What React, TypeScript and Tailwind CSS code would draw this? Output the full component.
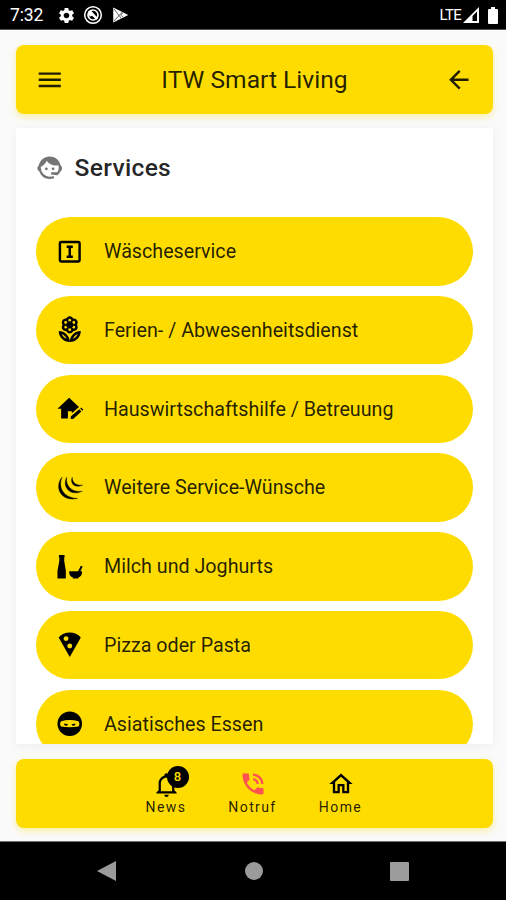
import type { ReactNode } from "react";
import { MdOutlineLocalFlorist, MdPhoneInTalk, MdSettings } from "react-icons/md";

function Icon({ children, className = "size-[29.5px]" }: { children: ReactNode; className?: string }) {
    return (
        <svg xmlns="http://www.w3.org/2000/svg" viewBox="0 0 24 24" fill="currentColor" className={className}>
            {children}
        </svg>
    );
}

const services = [
    {
        label: "Wäscheservice",
        icon: (
            <Icon>
                <path d="M5 3h14a2 2 0 0 1 2 2v14a2 2 0 0 1-2 2H5a2 2 0 0 1-2-2V5a2 2 0 0 1 2-2m0 2v14h14V5zm4.500 2h5v2H13v6h1.500v2h-5v-2H11V9H9.500z" />
            </Icon>
        ),
    },
    { label: "Ferien- / Abwesenheitsdienst", icon: <MdOutlineLocalFlorist className="size-[29.5px]" /> },
    {
        label: "Hauswirtschaftshilfe / Betreuung",
        icon: (
            <Icon>
                <path d="M11.500 3 2 12h3v8h5.500v-6h3.200v1.600L19.500 10.500z" />
                <path d="m12.800 18.400 6.900-6 1.800 1.900-6.800 6h-1.900zM20.500 11.700l.8-.7 1.800 1.900-.8.700z" />
            </Icon>
        ),
    },
    {
        label: "Weitere Service-Wünsche",
        icon: (
            <Icon>
                <path d="M5.700 3.500C-.5 11 4 23.500 18.200 20.700 8 20.500 1.800 12.500 5.700 3.500" stroke="currentColor" strokeWidth=".4" />
                <path d="M9.500 3.500C5.500 11 12 19.500 22.200 14.800 14.500 16 8.500 11.500 9.500 3.500" stroke="currentColor" strokeWidth=".3" />
                <path d="M14 3.500C12 8.500 16 13 22.500 9.800 17.500 10.500 14 8 14 3.500" stroke="currentColor" strokeWidth=".3" />
            </Icon>
        ),
    },
    {
        label: "Milch und Joghurts",
        icon: (
            <Icon>
                <path d="M3.200 2.500h4.600v1.800h-.3v3l1.300 8v6.200H2v-6.200l1.500-8v-3h-.3zM11.500 15.600h7.300l2.200-4.400 1.500.6-1.900 3.800H22c.2 3-1.200 4.600-3 5.200v.7h-4.500v-.7c-1.800-.6-3.200-2.200-3-5.200" />
            </Icon>
        ),
    },
    {
        label: "Pizza oder Pasta",
        icon: (
            <Icon>
                <path d="M12 15a2 2 0 0 1-2-2c0-1.110.9-2 2-2a2 2 0 0 1 2 2 2 2 0 0 1-2 2M7 7c0-1.110.890-2 2-2a2 2 0 0 1 2 2 2 2 0 0 1-2 2c-1.110 0-2-.9-2-2m5-5C8.430 2 5.230 3.540 3 6l9 16 9-16c-2.220-2.460-5.430-4-9-4" />
            </Icon>
        ),
    },
    {
        label: "Asiatisches Essen",
        icon: (
            <Icon>
                <path
                    fillRule="evenodd"
                    d="M12 2a10 10 0 1 0 0 20 10 10 0 0 0 0-20M5 10c4.500-1.300 9.500-1.300 14 0 1.100 1.300 1.100 2.900.2 4.200-4.700.9-9.700.9-14.400 0-.9-1.300-.9-2.900.2-4.200m2.500 1.700a1.600 1.500 0 0 0 3.100.8zm9 0-3.100.8a1.600 1.500 0 0 0 3.100-.8"
                />
            </Icon>
        ),
    },
];

function StatusBar() {
    return (
        <div className="flex h-[30px] shrink-0 items-center justify-between border-b border-neutral-600 bg-black pt-px pr-2 pl-[10px] text-white">
            <div className="flex items-center">
                <span className="w-[47px] text-[17.5px] tracking-[-0.1px]">7:32</span>
                <MdSettings className="size-[19px]" />
                <Icon className="ml-[7px] size-5">
                    <circle cx="12" cy="12" r="10" fill="none" stroke="currentColor" strokeWidth="1.800" />
                    <circle cx="12" cy="12" r="6" fill="none" stroke="currentColor" strokeWidth="2" />
                    <path d="m6 8 3-2 9 10-2 2-5-5-3 1z" />
                </Icon>
                <Icon className="ml-[8px] size-[18px]">
                    <path d="M3 2 23 12 3 22z" />
                    <path fill="none" stroke="#555" strokeWidth="1.200" d="m4 4 10 13M4 20 15 8m1 1-3 3 3 3" />
                </Icon>
            </div>
            <div className="flex items-center">
                <span className="text-[15px] tracking-[-0.7px]">LTE</span>
                <svg viewBox="0 0 16 16" fill="currentColor" className="ml-[2px] size-4">
                    <path fillRule="evenodd" d="M16 0v16H0zm-2 4.500-4.500 4.500v5H14z" />
                </svg>
                <svg viewBox="0 0 10 17" fill="currentColor" className="ml-[9px] h-[17px] w-[10px]">
                    <path d="M3 0h4v2h2a1 1 0 0 1 1 1v13a1 1 0 0 1-1 1H1a1 1 0 0 1-1-1V3a1 1 0 0 1 1-1h2z" />
                </svg>
            </div>
        </div>
    );
}

export default function App() {
    return (
        <div className="flex h-[900px] w-[506px] flex-col overflow-hidden bg-[#fafafa] font-['Roboto',sans-serif] text-black/87">
            <StatusBar />

            <header className="mt-[15px] mr-[13px] ml-4 flex h-[69px] shrink-0 items-center justify-between rounded-lg bg-[#ffdc00] pr-[19px] pl-[19px] shadow-[0_3px_7px_rgba(255,220,0,0.35)]">
                <Icon>
                    <path d="M3 6h18v2H3zm0 5h18v2H3zm0 5h18v2H3z" />
                </Icon>
                <h1 className="pt-px text-[24.6px]">ITW Smart Living</h1>
                <Icon>
                    <path d="M20 11v2H8l5.500 5.500-1.420 1.420L4.160 12l7.920-7.920L13.500 5.500 8 11z" />
                </Icon>
            </header>

            <main className="mt-[14px] mr-[13px] ml-4 h-[616px] shrink-0 overflow-hidden bg-white shadow-[0_2px_10px_rgba(0,0,0,0.05)]">
                <div className="flex h-[89px] items-start pt-[22px] pl-[19px]">
                    <Icon className="mt-[3px] size-[29.5px] text-[#757575]">
                        <path d="M18.720 14.760c.350-.850.540-1.760.540-2.760 0-.720-.110-1.410-.3-2.050-.650.150-1.330.230-2.040.230-3.060 0-5.770-1.510-7.420-3.840-.890 2.160-2.590 3.920-4.730 4.880-.040.250-.040.520-.040.780A7.270 7.270 0 0 0 12 19.270c1.050 0 2.060-.230 2.970-.640.570 1.090.830 1.630.810 1.630-1.640.550-2.910.820-3.780.820-2.420 0-4.730-.950-6.430-2.660a9 9 0 0 1-2.240-3.690C2.500 14.500 2 13.500 2 12.450c0-1.050.4-1.900 1.090-2.270C3.930 6.040 7.600 2.920 12 2.920c2.400 0 4.710.950 6.420 2.660a9.100 9.100 0 0 1 2.470 4.600C21.600 10.600 22 11.400 22 12.450c0 1.100-.5 2-1.200 2.600L18.380 18l-5.300-.6v-1.670h4.830z" />
                        <circle cx="9.270" cy="12.910" r="1.140" />
                        <circle cx="14.720" cy="12.910" r="1.140" />
                    </Icon>
                    <h2 className="ml-[10px] text-[24.6px] leading-9 font-medium tracking-[0.31px]">Services</h2>
                </div>
                <ul className="flex flex-col gap-[10.3px] pr-5 pl-[19.5px]">
                    {services.map((service) => (
                        <li key={service.label} className="flex h-[68.5px] shrink-0 items-center rounded-full bg-[#ffdc00] pl-[19.2px]">
                            <span className="w-[49.3px] text-black">{service.icon}</span>
                            <span className="pt-px text-[19.7px] whitespace-nowrap">{service.label}</span>
                        </li>
                    ))}
                </ul>
            </main>

            <nav className="mt-[15px] mr-[13px] ml-4 flex h-[69px] shrink-0 justify-center rounded-lg bg-[#ffdc00] pr-[1px] text-[14px] leading-4 tracking-[1.4px] shadow-[0_3px_7px_rgba(255,220,0,0.35)]">
                <div className="flex w-[87px] flex-col items-center pt-[12px]">
                    <span className="relative text-black">
                        <Icon className="size-[27px]">
                            <path d="M10 21h4c0 1.100-.9 2-2 2s-2-.9-2-2m11-2v1H3v-1l2-2v-6c0-3.100 2-5.800 5-6.700V4c0-1.100.9-2 2-2s2 .9 2 2v.3c3 .9 5 3.600 5 6.700v6zm-4-8c0-2.800-2.200-5-5-5s-5 2.200-5 5v7h10z" />
                        </Icon>
                        <span className="absolute -top-[5px] left-[14px] flex size-[22px] items-center justify-center rounded-full bg-black text-[13px] font-medium tracking-normal text-[#ffdc00]">
                            8
                        </span>
                    </span>
                    <span className="mt-[1px]">News</span>
                </div>
                <div className="flex w-[86px] flex-col items-center pt-[11px]">
                    <MdPhoneInTalk className="size-[28px] text-[#ff5252]" />
                    <span className="mt-[1px]">Notruf</span>
                </div>
                <div className="flex w-[90px] flex-col items-center pt-[11px]">
                    <Icon className="size-[28px] text-black">
                        <path d="m12 5.690 5 4.500V18h-2v-6H9v6H7v-7.810zM12 3 2 12h3v8h6v-6h2v6h6v-8h3z" />
                    </Icon>
                    <span className="mt-[1px]">Home</span>
                </div>
            </nav>

            <footer className="mt-auto flex h-[59px] items-center justify-between border-t border-neutral-500 bg-black pr-[97px] pl-[97px] text-[#9b9b9b]">
                <svg viewBox="0 0 20 20" fill="currentColor" className="size-5">
                    <path d="M19 0v20L0 10z" />
                </svg>
                <span className="size-[18px] rounded-full bg-[#9b9b9b]" />
                <span className="size-[19px] rounded-[1px] bg-[#9b9b9b]" />
            </footer>
        </div>
    );
}
